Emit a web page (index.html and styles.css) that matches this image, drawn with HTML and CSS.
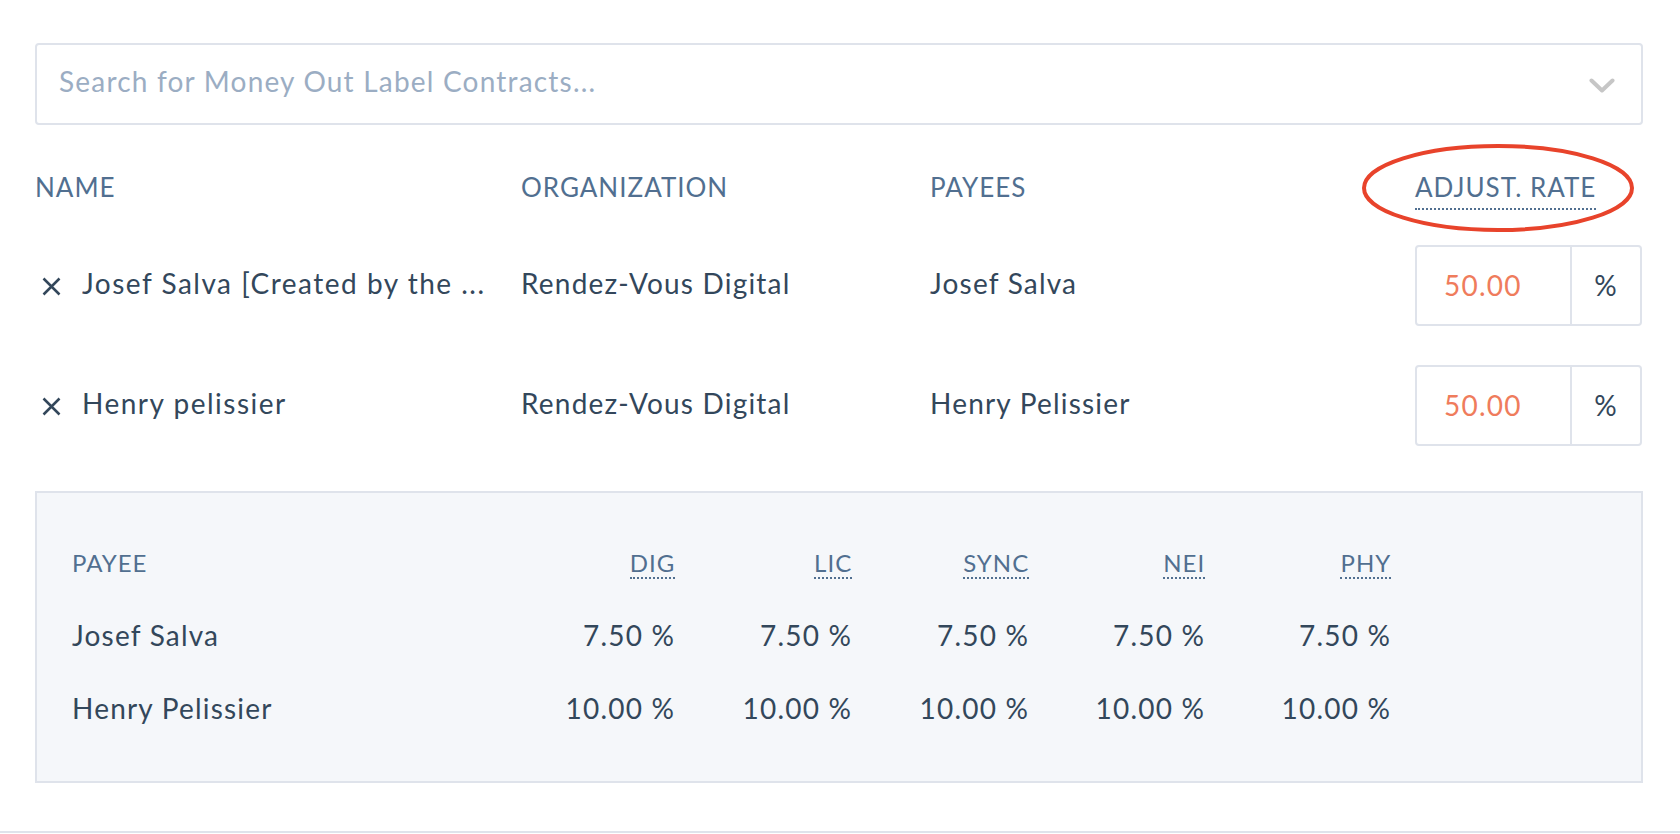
FILE: index.html
```html
<!DOCTYPE html>
<html lang="en">
<head>
    <meta charset="UTF-8">
    <meta name="viewport" content="width=device-width, initial-scale=1.0">
    <title>Money Out Label Contracts</title>
    <link rel="stylesheet" href="styles.css">
</head>
<body>
    <div class="page">
        <!-- Contract search -->
        <div class="search">
            <span class="search-placeholder">Search for Money Out Label Contracts...</span>
            <svg class="chevron" width="26" height="15" viewBox="0 0 26 15">
                <path d="M2.5 2.5 L13 12.5 L23.5 2.5" fill="none" stroke="#c6c6c6" stroke-width="4" stroke-linecap="round" stroke-linejoin="round"/>
            </svg>
        </div>

        <!-- Selected contracts -->
        <div class="contracts">
            <div class="contracts-head">
                <div>NAME</div>
                <div>ORGANIZATION</div>
                <div>PAYEES</div>
                <div>
                    <span class="hint rate-hint">ADJUST. RATE
                        <svg class="annotation" width="272" height="92" viewBox="0 0 272 92">
                            <ellipse cx="136" cy="46" rx="134" ry="42" fill="none" stroke="#e8432b" stroke-width="4"/>
                        </svg>
                    </span>
                </div>
            </div>

            <div class="contract-row">
                <div class="cell name-cell">
                    <svg class="remove" width="19" height="19" viewBox="0 0 19 19">
                        <path d="M1.5 1.5 L17.5 17.5 M17.5 1.5 L1.5 17.5" stroke="#33475b" stroke-width="2.5"/>
                    </svg>
                    <span class="name-text">Josef Salva [Created by the ...</span>
                </div>
                <div class="cell">Rendez-Vous Digital</div>
                <div class="cell">Josef Salva</div>
                <div class="rate-group">
                    <div class="rate-input">50.00</div>
                    <div class="rate-addon">%</div>
                </div>
            </div>

            <div class="contract-row">
                <div class="cell name-cell">
                    <svg class="remove" width="19" height="19" viewBox="0 0 19 19">
                        <path d="M1.5 1.5 L17.5 17.5 M17.5 1.5 L1.5 17.5" stroke="#33475b" stroke-width="2.5"/>
                    </svg>
                    <span class="name-text">Henry pelissier</span>
                </div>
                <div class="cell">Rendez-Vous Digital</div>
                <div class="cell">Henry Pelissier</div>
                <div class="rate-group">
                    <div class="rate-input">50.00</div>
                    <div class="rate-addon">%</div>
                </div>
            </div>
        </div>

        <!-- Resulting split per payee -->
        <div class="split-panel">
            <div class="split-table">
                <div class="split-head">PAYEE</div>
                <div class="split-head num"><span class="hint">DIG</span></div>
                <div class="split-head num"><span class="hint">LIC</span></div>
                <div class="split-head num"><span class="hint">SYNC</span></div>
                <div class="split-head num"><span class="hint">NEI</span></div>
                <div class="split-head num"><span class="hint">PHY</span></div>

                <div>Josef Salva</div>
                <div class="num">7.50 %</div>
                <div class="num">7.50 %</div>
                <div class="num">7.50 %</div>
                <div class="num">7.50 %</div>
                <div class="num">7.50 %</div>

                <div>Henry Pelissier</div>
                <div class="num">10.00 %</div>
                <div class="num">10.00 %</div>
                <div class="num">10.00 %</div>
                <div class="num">10.00 %</div>
                <div class="num">10.00 %</div>
            </div>
        </div>
    </div>
    <div class="footer-line"></div>
</body>
</html>
```

FILE: styles.css
```css
body {
    margin: 0;
    font-family: Lato, "Noto Sans", sans-serif;
    letter-spacing: 1.2px;
    color: #33475b;
    background-color: #fff;
}
.page {
    padding: 43px 37px 0 35px;
}

/* Search */
.search {
    height: 82px;
    box-sizing: border-box;
    border: 2px solid #dfe3eb;
    border-radius: 4px;
    display: flex;
    align-items: center;
    justify-content: space-between;
    padding: 0 26px 6px 22px;
}
.search-placeholder {
    font-size: 28px;
    line-height: 34px;
    color: #9badc3;
}
.chevron {
    margin-top: 9px;
}

/* Contracts table */
.contracts-head,
.contract-row {
    display: grid;
    grid-template-columns: 486px 409px 485px 1fr;
}
.contracts-head {
    height: 100px;
    box-sizing: border-box;
    padding-top: 47px;
    font-size: 26px;
    line-height: 31px;
    letter-spacing: 1px;
    color: #516f90;
}
.hint {
    display: inline-block;
    border-bottom: 2px dotted #516f90;
}
.rate-hint {
    position: relative;
    padding-bottom: 5px;
}
.annotation {
    position: absolute;
    left: -53px;
    top: -30px;
}
.contract-row {
    height: 120px;
    align-items: center;
    font-size: 28px;
    line-height: 34px;
}
.cell {
    padding-bottom: 4px;
    white-space: nowrap;
}
.name-cell {
    display: flex;
    align-items: center;
    gap: 21px;
    padding-left: 7px;
    overflow: hidden;
}
.remove {
    flex-shrink: 0;
    margin-top: 6px;
}
.name-text {
    overflow: hidden;
    text-overflow: ellipsis;
    letter-spacing: 1.5px;
}
.rate-group {
    display: flex;
    height: 81px;
}
.rate-input {
    width: 157px;
    box-sizing: border-box;
    border: 2px solid #dfe3eb;
    border-radius: 4px 0 0 4px;
    display: flex;
    align-items: center;
    padding-left: 27px;
    color: #ef7c5c;
}
.rate-addon {
    width: 70px;
    box-sizing: border-box;
    border: 2px solid #dfe3eb;
    border-left: none;
    border-radius: 0 4px 4px 0;
    display: flex;
    align-items: center;
    justify-content: center;
}

/* Split panel */
.split-panel {
    margin-top: 26px;
    border: 2px solid #dfe3eb;
    background-color: #f5f7fa;
    padding: 55px 35px 56px;
}
.split-table {
    display: grid;
    grid-template-columns: 420px 182px 177px 177px 176px 186px;
    row-gap: 39px;
    font-size: 28px;
    line-height: 34px;
}
.split-head {
    font-size: 24px;
    line-height: 29px;
    letter-spacing: 1px;
    color: #516f90;
}
.num {
    text-align: right;
    margin-right: -1.2px;
}

.footer-line {
    margin-top: 48px;
    border-top: 2px solid #dfe3eb;
}
```
